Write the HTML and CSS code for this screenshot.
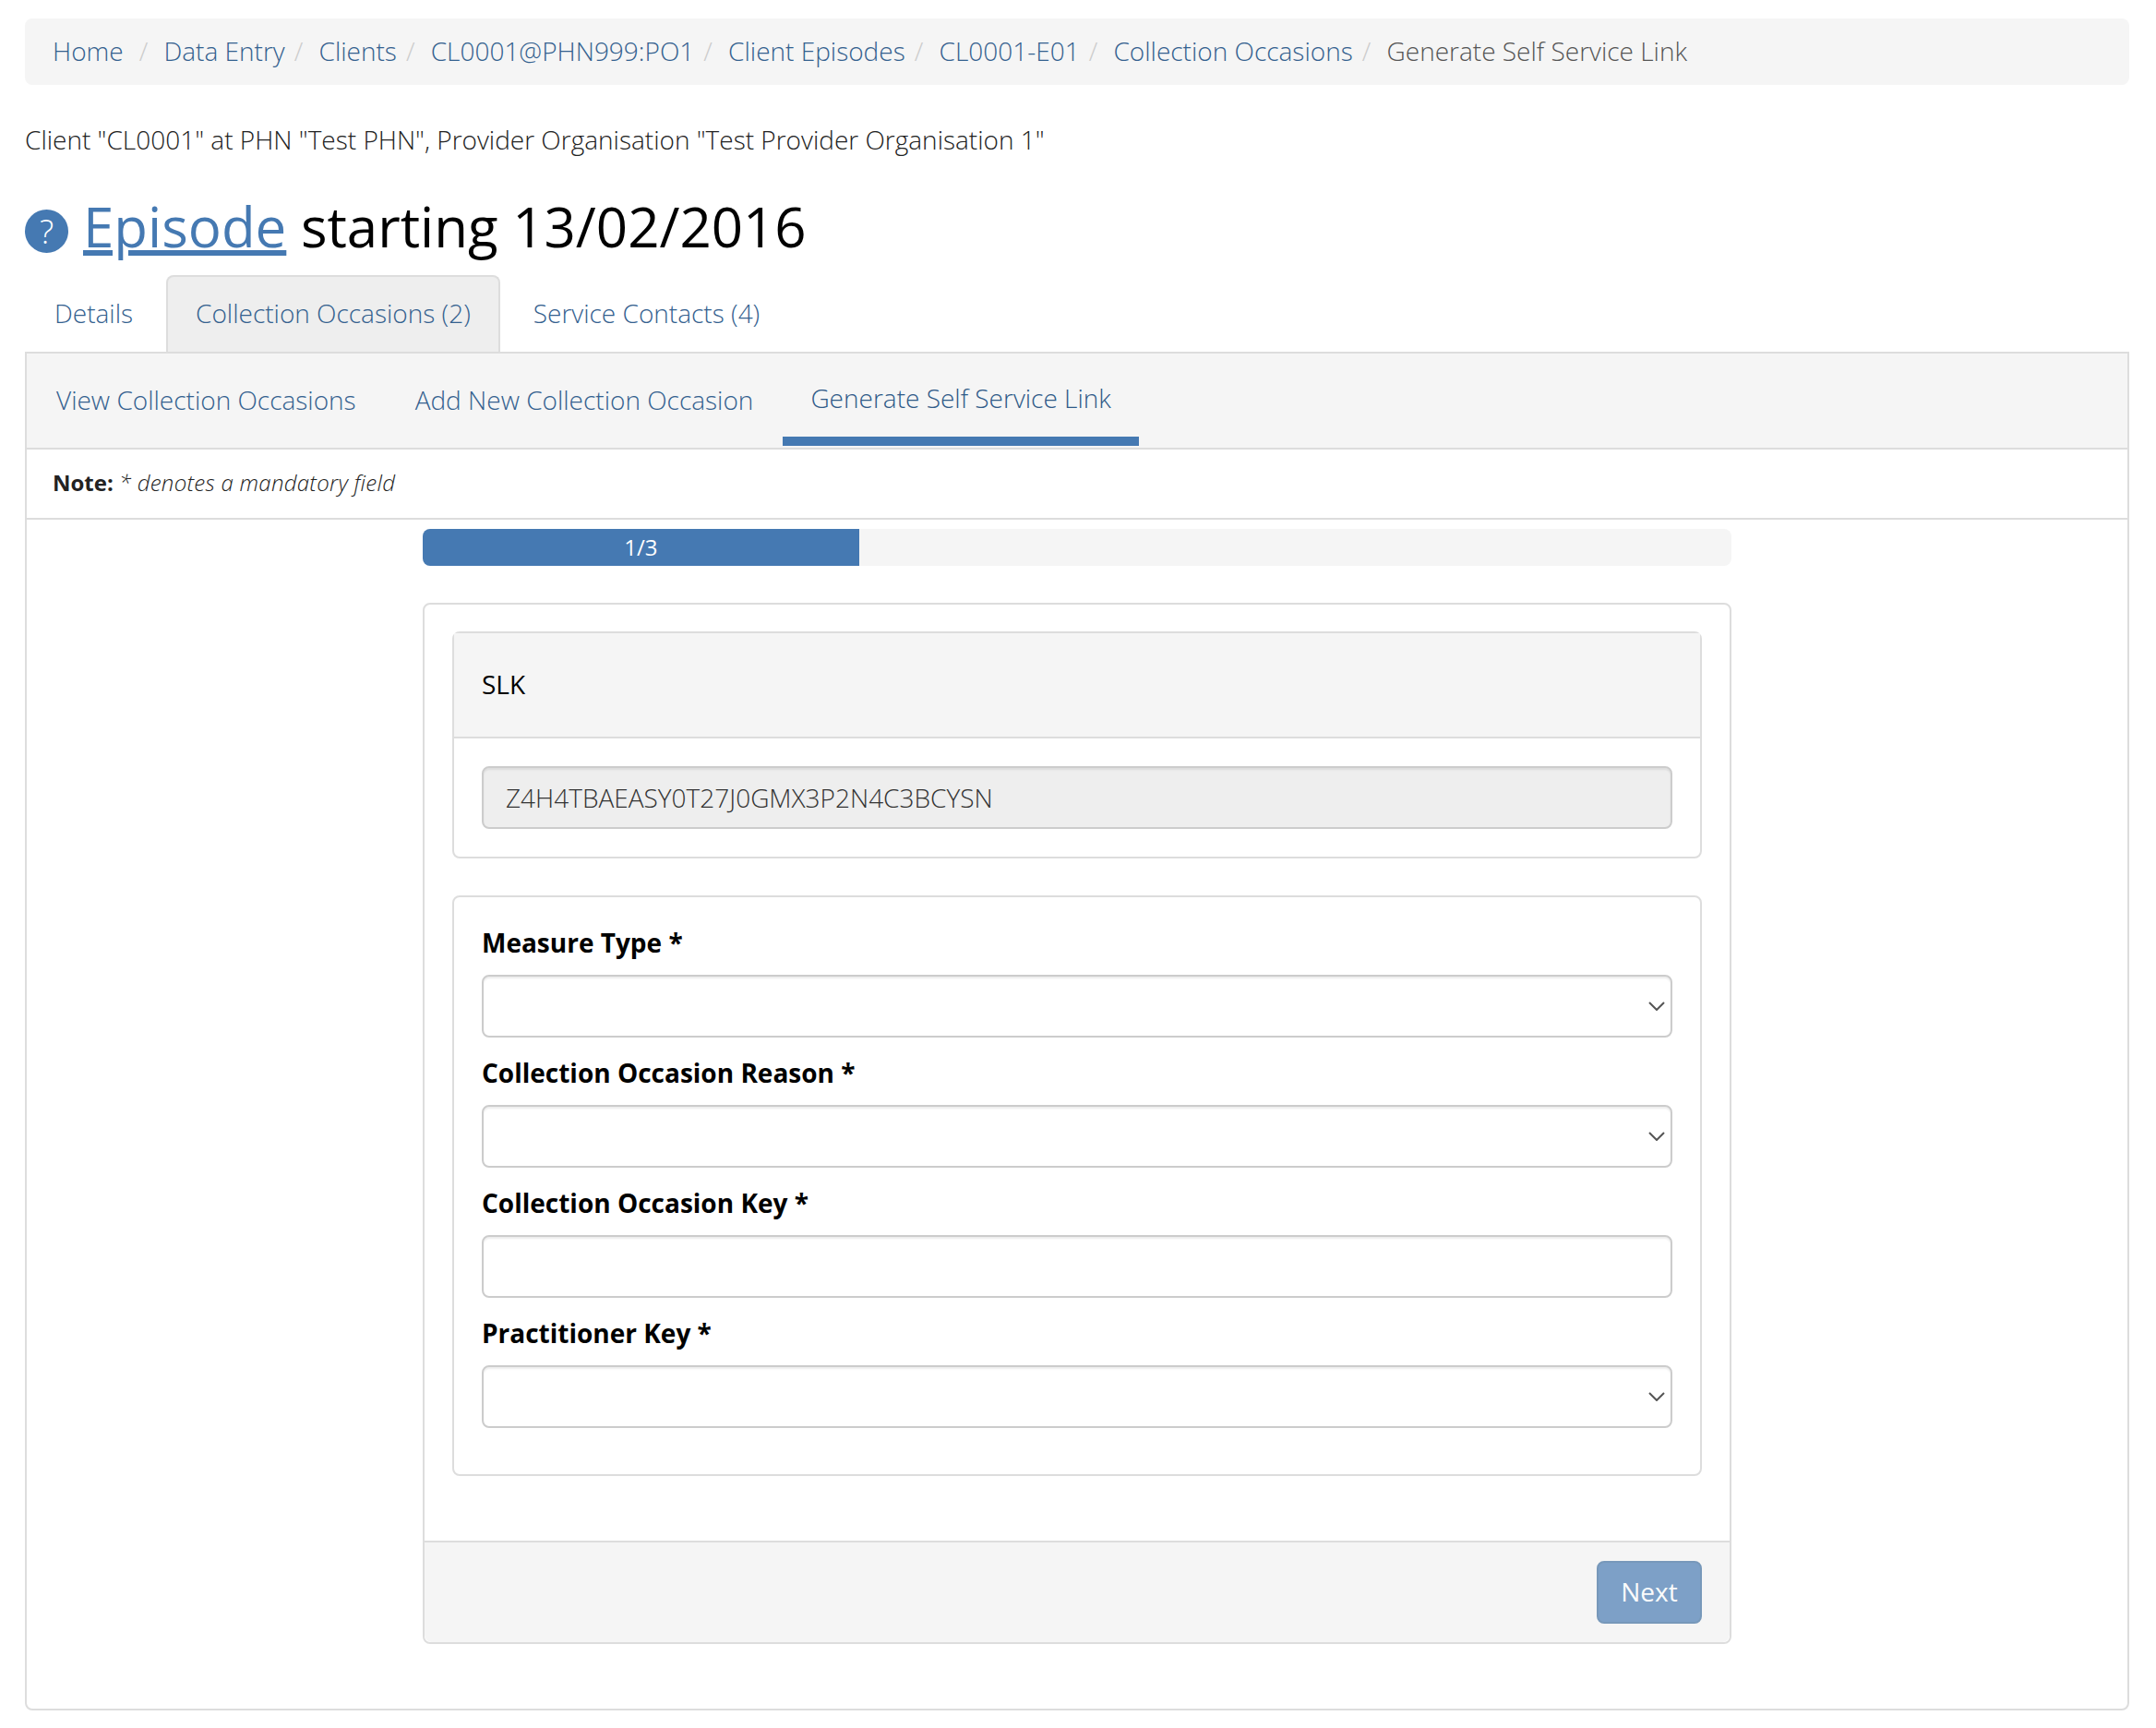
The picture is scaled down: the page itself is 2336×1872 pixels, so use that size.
FILE: index.html
```html
<!DOCTYPE html>
<html lang="en">
<head>
    <meta charset="UTF-8">
    <meta name="viewport" content="width=device-width, initial-scale=1.0">
    <title>Generate Self Service Link</title>
    <link rel="stylesheet" href="styles.css">
</head>
<body>
    <ol class="breadcrumb">
        <li><a href="#">Home</a></li>
        <li class="first-sep"><a href="#">Data Entry</a></li>
        <li><a href="#">Clients</a></li>
        <li><a href="#">CL0001@PHN999:PO1</a></li>
        <li><a href="#">Client Episodes</a></li>
        <li><a href="#">CL0001-E01</a></li>
        <li><a href="#">Collection Occasions</a></li>
        <li class="current">Generate Self Service Link</li>
    </ol>

    <p class="client-line">Client "CL0001" at PHN "Test PHN", Provider Organisation "Test Provider Organisation 1"</p>

    <h1 class="page-title">
        <span class="help-icon">?</span>
        <span><a href="#">Episode</a> starting 13/02/2016</span>
    </h1>

    <ul class="tabs">
        <li><a href="#">Details</a></li>
        <li class="active"><a href="#">Collection Occasions (2)</a></li>
        <li><a href="#">Service Contacts (4)</a></li>
    </ul>

    <div class="tab-panel">
        <ul class="subnav">
            <li><a href="#">View Collection Occasions</a></li>
            <li><a href="#">Add New Collection Occasion</a></li>
            <li class="active"><a href="#">Generate Self Service Link</a></li>
        </ul>

        <div class="note"><strong>Note:</strong> <em>* denotes a mandatory field</em></div>

        <div class="wizard">
            <div class="progress">
                <div class="progress-bar" style="width: 33.33%">1/3</div>
            </div>

            <div class="wizard-card">
                <div class="wizard-body">
                    <div class="panel">
                        <div class="panel-heading">SLK</div>
                        <div class="panel-body">
                            <input class="form-control" type="text" value="Z4H4TBAEASY0T27J0GMX3P2N4C3BCYSN" disabled>
                        </div>
                    </div>

                    <div class="panel">
                        <form class="fields">
                            <label for="measure">Measure Type *</label>
                            <div class="select-wrap">
                                <select class="form-control" id="measure"></select>
                                <svg class="chevron" width="18" height="10" viewBox="0 0 18 10"><path d="M1 1l8 8 8-8" fill="none" stroke="#555" stroke-width="2"/></svg>
                            </div>

                            <label for="reason">Collection Occasion Reason *</label>
                            <div class="select-wrap">
                                <select class="form-control" id="reason"></select>
                                <svg class="chevron" width="18" height="10" viewBox="0 0 18 10"><path d="M1 1l8 8 8-8" fill="none" stroke="#555" stroke-width="2"/></svg>
                            </div>

                            <label for="key">Collection Occasion Key *</label>
                            <input class="form-control" id="key" type="text">

                            <label for="practitioner">Practitioner Key *</label>
                            <div class="select-wrap">
                                <select class="form-control" id="practitioner"></select>
                                <svg class="chevron" width="18" height="10" viewBox="0 0 18 10"><path d="M1 1l8 8 8-8" fill="none" stroke="#555" stroke-width="2"/></svg>
                            </div>
                        </form>
                    </div>
                </div>

                <div class="wizard-footer">
                    <button class="btn-next" type="button">Next</button>
                </div>
            </div>
        </div>
    </div>
</body>
</html>
```

FILE: styles.css
```css
* {
    box-sizing: border-box;
}

body {
    margin: 0;
    padding: 20px 29px 20px 27px;
    font-family: 'Open Sans', sans-serif;
    font-size: 28px;
    font-weight: 300;
    line-height: 40px;
    color: #222;
    background: #fff;
}

a {
    color: #34618f;
    text-decoration: none;
}

/* breadcrumb */
.breadcrumb {
    display: flex;
    list-style: none;
    margin: 0 0 40px;
    padding: 15px 30px 17px;
    background: #f5f5f5;
    border-radius: 8px;
}

.breadcrumb li + li::before {
    content: "/\00a0";
    padding: 0 10px;
    color: #ccc;
}

.breadcrumb li.first-sep::before {
    padding: 0 10px 0 17px;
}

.breadcrumb .current {
    color: #555;
}

.client-line {
    margin: -1px 0 34px;
}

/* heading */
.page-title {
    display: flex;
    align-items: center;
    gap: 16px;
    margin: 0 0 13px;
    font-size: 60px;
    line-height: 80px;
    font-weight: 400;
    color: #000;
}

.page-title a {
    color: #4579b2;
    text-decoration: underline;
}

.help-icon {
    flex: none;
    width: 47px;
    height: 47px;
    margin-top: 11px;
    border-radius: 50%;
    background: #4579b2;
    color: #fff;
    font-size: 36px;
    font-weight: 300;
    line-height: 47px;
    text-align: center;
}

/* tabs */
.tabs {
    display: flex;
    gap: 4px;
    list-style: none;
    margin: 0;
    padding: 0;
    position: relative;
    z-index: 1;
}

.tabs a {
    display: block;
    padding: 21px 32px 19px 32px;
    height: 83px;
}

.tabs li.active a {
    padding: 19px 30px;
    margin-bottom: -2px;
    background: #eee;
    border: 2px solid #ddd;
    border-bottom: 0;
    border-radius: 8px 8px 0 0;
}

.tab-panel {
    height: 1472px;
    border: 2px solid #ddd;
    border-radius: 0 0 8px 8px;
}

/* sub navigation */
.subnav {
    display: flex;
    list-style: none;
    height: 104px;
    margin: 0;
    padding: 0;
    background: #f5f5f5;
    border-bottom: 2px solid #ddd;
}

.subnav a {
    display: block;
    padding: 30px 32px 0;
}

.subnav li.active a {
    height: 100px;
    padding: 28px 30px 0;
    border-bottom: 10px solid #4579b2;
    color: #2f5a88;
}

.note {
    height: 76px;
    padding: 0 28px;
    font-size: 24px;
    line-height: 71px;
    border-bottom: 2px solid #ddd;
}

.note strong {
    font-weight: 700;
}

.note em {
    font-weight: 300;
    letter-spacing: 0.27px;
}

/* wizard */
.wizard {
    width: 1418px;
    margin: 10px auto 0;
}

.progress {
    height: 40px;
    margin-bottom: 40px;
    background: #f5f5f5;
    border-radius: 8px;
    overflow: hidden;
}

.progress-bar {
    height: 100%;
    background: #4579b2;
    color: #fff;
    font-size: 24px;
    font-weight: 400;
    line-height: 40px;
    text-align: center;
}

.wizard-card {
    border: 2px solid #ddd;
    border-radius: 8px;
}

.wizard-body {
    padding: 29px 30px 70px;
}

.panel {
    border: 2px solid #ddd;
    border-radius: 8px;
}

.panel + .panel {
    margin-top: 40px;
}

.panel-heading {
    height: 114px;
    padding: 35px 30px 0;
    font-weight: 400;
    color: #000;
    background: #f5f5f5;
    border-bottom: 2px solid #ddd;
}

.panel-body {
    padding: 30px;
}

.fields {
    padding: 29px 30px 50px;
}

.fields label {
    display: block;
    margin-bottom: 15px;
    font-weight: 700;
    color: #000;
}

.form-control {
    display: block;
    width: 100%;
    height: 68px;
    padding: 12px 24px;
    font-family: inherit;
    font-size: 28px;
    font-weight: 300;
    color: #333;
    background: #fff;
    border: 2px solid #ccc;
    border-radius: 8px;
    box-shadow: inset 0 2px 2px rgba(0, 0, 0, 0.075);
    appearance: none;
}

.form-control:disabled {
    background: #eee;
    opacity: 1;
}

.fields .form-control,
.fields .select-wrap {
    margin-bottom: 18px;
}

.fields .select-wrap .form-control {
    margin-bottom: 0;
}

.fields > :last-child {
    margin-bottom: 0;
}

.select-wrap {
    position: relative;
}

.chevron {
    position: absolute;
    top: 29px;
    right: 8px;
}

.wizard-footer {
    display: flex;
    justify-content: flex-end;
    height: 110px;
    padding: 20px 30px 0 0;
    background: #f5f5f5;
    border-top: 2px solid #ddd;
    border-radius: 0 0 8px 8px;
}

.btn-next {
    width: 114px;
    height: 68px;
    padding: 0 0 3px;
    font-family: inherit;
    font-size: 28px;
    font-weight: 400;
    color: #fff;
    background: #4579b2;
    border: 2px solid #3d6d9f;
    border-radius: 8px;
    opacity: 0.68;
}
```
